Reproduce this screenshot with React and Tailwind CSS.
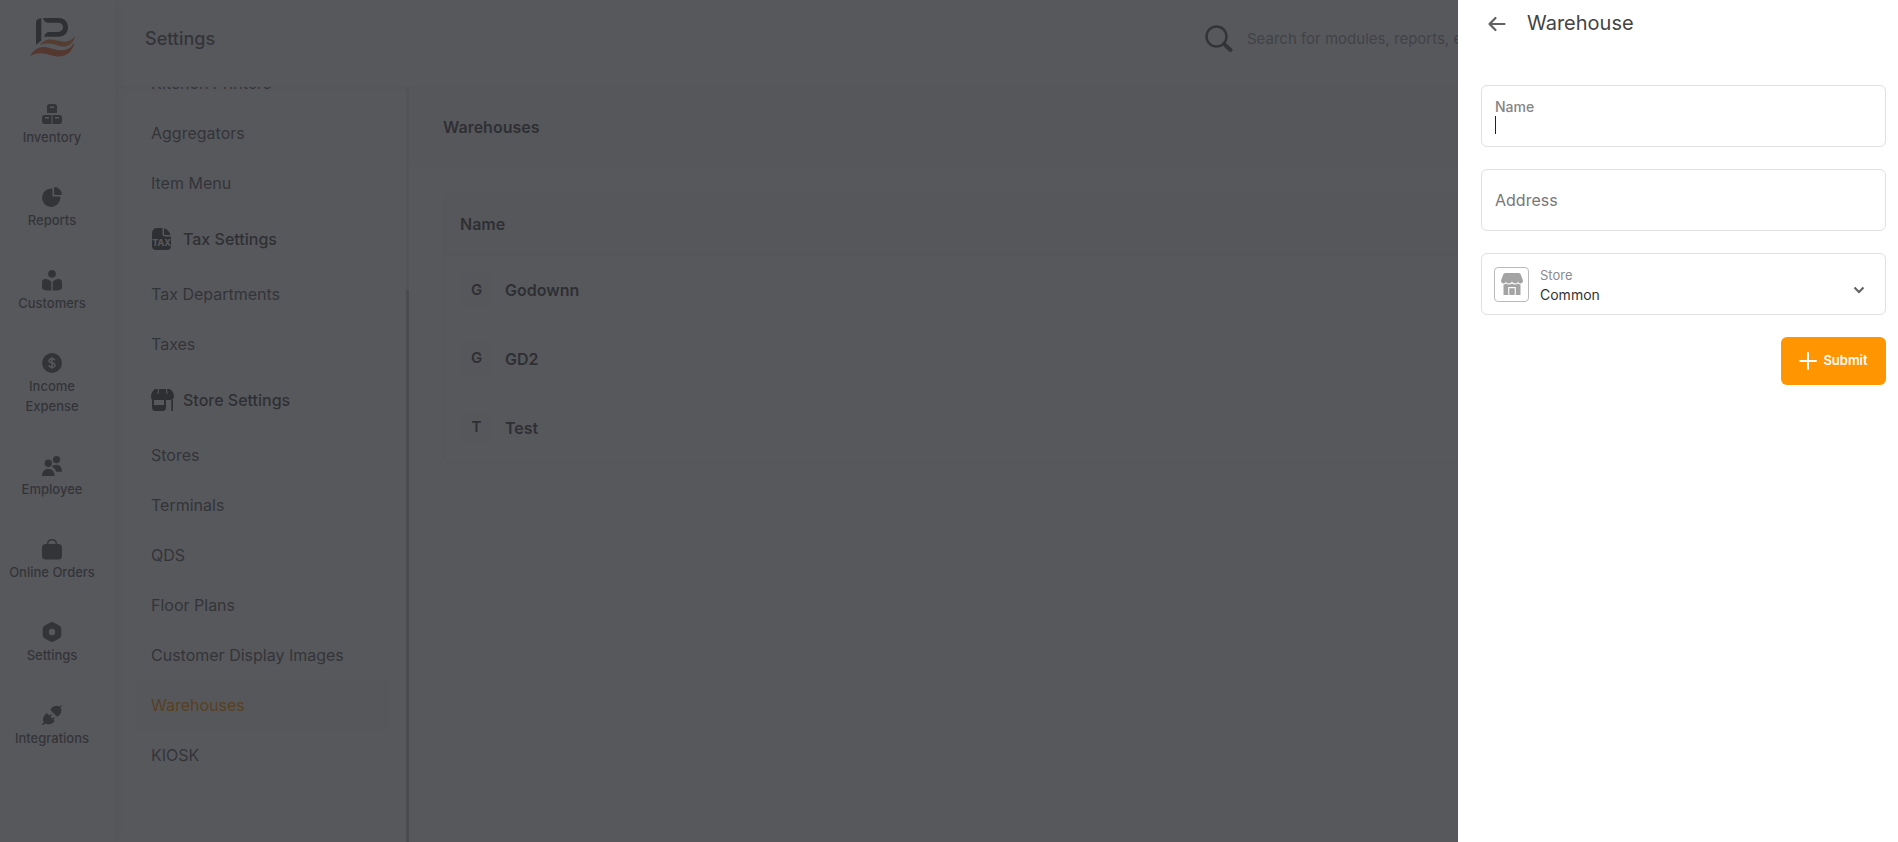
import React, { useState } from 'react';

const icons = {
  inventory: (
    <path d="M7.500 0h5A2.500 2.500 0 0 1 15 2.500V9H5V2.500A2.500 2.500 0 0 1 7.500 0ZM8 2.500v1.500h4V2.500ZM2.500 11H9.500v9h-7A2.500 2.500 0 0 1 0 17.500v-4A2.500 2.500 0 0 1 2.500 11ZM3 13v1.500h4V13ZM10.500 11h7a2.500 2.500 0 0 1 2.500 2.500v4a2.500 2.500 0 0 1-2.500 2.500h-7ZM13 13v1.500h4V13Z" fillRule="evenodd" />
  ),
  reports: (
    <>
      <path d="M9 1.500c1 0 1.500.5 1.500 1.500v5.500c0 .6.400 1 1 1H17c1 0 1.500.6 1.400 1.600A9.200 9.200 0 1 1 9 1.500Z" />
      <path d="M12 1.200c0-.8.600-1.300 1.400-1.100a8.500 8.500 0 0 1 6.400 6.300c.2.900-.3 1.600-1.200 1.600H13.500c-.9 0-1.500-.6-1.500-1.500Z" />
    </>
  ),
  customers: (
    <>
      <circle cx="10" cy="3.800" r="3.900" />
      <path d="M9.300 20.400C6 20.900 0 20.400 0 17.500V12c0-2 1.600-3.300 3.600-3 2.600.300 4.400 1.300 5.700 2.500ZM10.700 20.400c3.300.5 9.300 0 9.300-2.900V12c0-2-1.600-3.300-3.600-3-2.600.300-4.400 1.300-5.700 2.500Z" />
    </>
  ),
  income: (
    <>
      <circle cx="10" cy="10" r="10" />
      <path d="M13 7.400C12.700 6.300 11.500 5.700 10 5.700c-1.700 0-2.900.8-2.900 2.100 0 2.900 5.900 1.400 5.900 4.300 0 1.400-1.300 2.200-3 2.200-1.600 0-2.900-.7-3.100-1.900M10 4.300v11.400" fill="none" stroke="#fff" strokeWidth="1.400" />
    </>
  ),
  employee: (
    <>
      <circle cx="14.500" cy="3.600" r="3.700" />
      <circle cx="6.300" cy="7.200" r="3.700" />
      <path d="M0 20c0-4.400 2.300-7 6.300-7s6.300 2.600 6.300 7ZM9.800 10.600c1.100-1.100 2.500-1.800 4.300-1.800 3.700 0 5.900 2.500 5.900 7h-6c-.6-2.300-2-4.100-4.200-5.200Z" />
    </>
  ),
  orders: (
    <>
      <path d="M5.500 5.500C5.500 2.300 7.200.7 10 .7s4.500 1.600 4.500 4.800" fill="none" stroke="currentColor" strokeWidth="1.500" />
      <rect y="5" width="20" height="15.500" rx="3.500" />
    </>
  ),
  settings: (
    <path d="M8.300.4a3.400 3.400 0 0 1 3.400 0l5.900 3.400a3.400 3.400 0 0 1 1.600 2.900v6.600a3.400 3.400 0 0 1-1.600 2.900l-5.900 3.400a3.400 3.400 0 0 1-3.400 0l-5.900-3.400a3.400 3.400 0 0 1-1.600-2.900V6.700a3.400 3.400 0 0 1 1.600-2.900ZM10 6.800a3.200 3.200 0 1 0 0 6.400 3.200 3.200 0 0 0 0-6.400Z" fillRule="evenodd" />
  ),
  integrations: (
    <>
      <path d="M8.800 3.800c2.200-3.300 6-4 8.900-2.200L19.200.100l.7.700L18.400 2.300c1.800 2.900 1.100 6.700-2.200 8.900l-1.400.200L8.600 5.200Z" />
      <path d="M3.400 9.300l1.400-1.300L7.400 10.600 8.900 9.100l1 1-1.500 1.500 2 2 1.500-1.500 1 1-1.500 1.500 1.300 1.400-1.300 1.400c-2.300 2.200-5.600 2.600-8.200 1L1 20.200l-1-1 1.700-1.900C.200 14.700 1.200 11.500 3.400 9.300Z" />
    </>
  ),
};

const navItems = [
  { icon: 'inventory', label: 'Inventory' },
  { icon: 'reports', label: 'Reports' },
  { icon: 'customers', label: 'Customers' },
  { icon: 'income', label: 'Income Expense' },
  { icon: 'employee', label: 'Employee' },
  { icon: 'orders', label: 'Online Orders' },
  { icon: 'settings', label: 'Settings' },
  { icon: 'integrations', label: 'Integrations' },
];

const settingsMenu = [
  { items: ['Kitchen Printers', 'Aggregators', 'Item Menu'] },
  { title: 'Tax Settings', icon: 'tax', items: ['Tax Departments', 'Taxes'] },
  {
    title: 'Store Settings',
    icon: 'store',
    items: ['Stores', 'Terminals', 'QDS', 'Floor Plans', 'Customer Display Images', 'Warehouses', 'KIOSK'],
  },
];

const warehouses = ['Godownn', 'GD2', 'Test'];

const Logo = () => (
  <svg width="46" height="40" viewBox="0 0 46 40" aria-label="Logo">
    <path d="M6 27V4.500C6 2 7.500.500 11.300.200V22.500L6 27Z" fill="#555" />
    <path d="M13 0h16c5.500 0 9 4 9 9.300s-3.500 9.400-9 9.400H14c.8-3 2.500-4.800 5.500-4.800H28c3 0 5-1.800 5-4.600S31 4.700 28 4.700H18.500C15.500 4.700 13.500 3 13 0Z" fill="#555" />
    <path d="M9.500 27.500C14 21 20 20.500 27 22.500c8 2.200 14 1.500 18-4.500-1.500 9-8.500 12.500-17.500 9.500-6-2-11-3-18 0Z" fill="#f58a4a" />
    <path d="M0 38c5-8 11-10.500 19.500-8 8 2.500 18 5.500 25-5.500-2 10-10 16-20.500 13.500-8-2-14-5-24 0Z" fill="#f0703a" />
  </svg>
);

const TaxIcon = () => (
  <svg width="22" height="22" viewBox="0 0 22 22" fill="currentColor" aria-hidden="true">
    <path d="M6 0h5.500v6c0 1.500 1 2.500 2.500 2.500h6V18a4 4 0 0 1-4 4H5a4 4 0 0 1-4-4V5a5 5 0 0 1 5-5Z" />
    <path d="M13 .3c3 1 5.500 3.500 6.700 6.700H13.500a.5.500 0 0 1-.5-.5Z" />
    <text x="10.500" y="18" textAnchor="middle" fontSize="9" fontWeight="700" fill="#fff">TAX</text>
  </svg>
);

const StoreSettingsIcon = () => (
  <svg width="24" height="22" viewBox="0 0 24 22" fill="currentColor" className="-mr-[2px]" aria-hidden="true">
    <path d="M4 0h3l-.5 5h1L8 0h7l.5 5h1L16 0h3c2.500 1.500 4 4.500 4 7.500 0 2-1 3-2.500 3.500H22v11h-1.700V11H15v7.500a3.500 3.500 0 0 1-3.500 3.500h-7A3.500 3.500 0 0 1 1 18.500V10.500C.3 9.800 0 8.700 0 7.500 0 4.500 1.500 1.500 4 0ZM3 11v5h10v-5Z" fillRule="evenodd" />
  </svg>
);

const ShopIcon = () => (
  <svg width="22" height="22" viewBox="0 0 22 22" fill="#a3a3a3" aria-hidden="true">
    <path d="M4 0h14l1.500 1L22 7.500C22 9.400 20.800 10.500 19.500 10.500S17.200 9.500 17 8.200c-.2 1.300-1.200 2.300-2.700 2.300S11.500 9.500 11 8.200c-.5 1.300-1.800 2.300-3.300 2.300S5.200 9.500 5 8.200c-.2 1.300-1.200 2.300-2.500 2.300S0 9.400 0 7.500L2.500 1Z" />
    <path d="M2.500 11.500c1 0 1.900-.3 2.500-1 .7.700 1.700 1 2.800 1s2.400-.4 3.200-1c.8.600 2 1 3.200 1 1.100 0 2.100-.3 2.800-1 .6.700 1.500 1 2.500 1V22h-4.700v-8H7.200v8H2.500Z" />
    <path d="M8.300 15.200h5.400V22H8.300Z" />
  </svg>
);

export default function App() {
  const [name, setName] = useState('');
  const [address, setAddress] = useState('');
  const [store, setStore] = useState('Common');

  return (
    <div className="relative h-screen overflow-hidden bg-white font-['Inter',sans-serif] text-[#666]">
      <div className="flex h-full">
        {/* Main navigation */}
        <nav className="flex w-[117px] shrink-0 flex-col border-r border-[#f3f3f3] shadow-[4px_0_12px_rgba(0,0,0,0.04)]">
          <div className="flex h-[88px] items-center pb-3 pl-[30px]">
            <Logo />
          </div>
          <ul className="w-[104px] pt-4">
            {navItems.map((item) => (
              <li key={item.label} className="mb-10">
                <a href="#" className="flex flex-col items-center gap-[3px] px-1 text-center text-[13px] leading-5 font-medium">
                  <svg width="20" height="20" viewBox="0 0 20 20" fill="currentColor" className="overflow-visible" aria-hidden="true">
                    {icons[item.icon]}
                  </svg>
                  {item.label}
                </a>
              </li>
            ))}
          </ul>
        </nav>

        <div className="flex min-w-0 flex-1 flex-col">
          <header className="flex h-[87px] shrink-0 items-center border-b border-[#f3f3f3] pb-2 pl-7 shadow-[0_4px_12px_rgba(0,0,0,0.03)]">
            <h1 className="flex-1 text-lg font-medium">Settings</h1>
            <label className="mr-[203px] flex w-[490px] items-center gap-[14px]">
              <svg width="28" height="28" viewBox="0 0 28 28" fill="none" stroke="currentColor" aria-hidden="true">
                <circle cx="11.500" cy="11.500" r="10" strokeWidth="2.500" />
                <path d="M19 19l6.500 6" strokeWidth="4" strokeLinecap="round" />
              </svg>
              <input
                aria-label="Search"
                placeholder="Search for modules, reports, etc"
                className="flex-1 bg-transparent text-[15px] outline-none placeholder:text-[#a0a0a0]"
              />
            </label>
          </header>

          <div className="flex min-h-0 flex-1">
            {/* Settings menu, scrolled down */}
            <aside className="flex w-[292px] shrink-0">
              <div className="flex min-w-0 flex-1 flex-col justify-end overflow-hidden pr-4 pb-[62px] pl-[18px]">
                {settingsMenu.map((group) => (
                  <section key={group.items[0]}>
                    {group.title && (
                      <h2 className="flex h-[61px] items-center gap-[10px] pl-4 font-medium text-[#505050]">
                        {group.icon === 'tax' ? <TaxIcon /> : <StoreSettingsIcon />}
                        {group.title}
                      </h2>
                    )}
                    <ul>
                      {group.items.map((item) => (
                        <li key={item}>
                          <a
                            href="#"
                            className={`flex h-[50px] items-center rounded pl-4 ${
                              item === 'Warehouses' ? 'bg-[#fafafa] text-[#ff9500]' : ''
                            }`}
                          >
                            {item}
                          </a>
                        </li>
                      ))}
                    </ul>
                  </section>
                ))}
              </div>
              <div className="flex w-[3px] flex-col bg-[#eee]">
                <div className="mt-[203px] flex-1 bg-[#c8c8c8]" />
              </div>
            </aside>

            <main className="min-w-0 flex-1">
              <div className="flex h-20 items-center border-b border-[#f3f3f3] bg-[#fbfbfb] pl-[34px]">
                <h2 className="font-semibold text-[#505050]">Warehouses</h2>
              </div>
              <div className="px-[34px] pt-[26px]">
                <div className="overflow-hidden rounded-lg border border-[#f3f3f3]">
                  <table className="w-full text-left text-[#505050]">
                    <thead>
                      <tr className="h-[61px] border-b border-[#f3f3f3] bg-[#fbfbfb]">
                        <th className="pl-4 font-semibold">Name</th>
                      </tr>
                    </thead>
                    <tbody>
                      {warehouses.map((w) => (
                        <tr key={w} className="h-[69px] font-semibold">
                          <td className="pl-4">
                            <div className="flex items-center gap-3">
                              <span className="flex size-[33px] items-center justify-center rounded bg-[#fafafa] text-[15px]">
                                {w[0]}
                              </span>
                              {w}
                            </div>
                          </td>
                        </tr>
                      ))}
                    </tbody>
                  </table>
                </div>
              </div>
            </main>
          </div>
        </div>
      </div>

      <div className="absolute inset-0 bg-[#25262b]/77" />

      {/* Warehouse drawer */}
      <div role="dialog" aria-label="Warehouse" className="absolute inset-y-0 right-0 w-[440px] bg-white pr-3 pl-[23px]">
        <div className="flex h-[46px] items-center gap-5">
          <button type="button" aria-label="Back" className="pt-[2px] pl-[6px]">
            <svg width="20" height="20" viewBox="0 0 20 20" fill="none" stroke="#606060" strokeWidth="2.200" strokeLinecap="round" strokeLinejoin="round">
              <path d="M17.500 10H2.500M8.500 4l-6 6 6 6" />
            </svg>
          </button>
          <h2 className="text-xl text-[#444]">Warehouse</h2>
        </div>

        <form className="flex flex-col gap-[22px] pt-[39px]" onSubmit={(e) => e.preventDefault()}>
          <label className="flex h-[62px] flex-col rounded-md border border-[#e0e0e0] px-[13px] pt-3">
            <span className="text-sm leading-[18px] font-medium text-[#858585]">Name</span>
            <span className="flex items-center">
              {name === '' && <span className="h-[18px] w-px bg-[#222]" />}
              <input
                autoFocus
                value={name}
                onChange={(e) => setName(e.target.value)}
                className={`h-[18px] min-w-0 flex-1 text-base leading-[18px] text-[#333] outline-none ${name === '' ? 'caret-transparent' : ''}`}
              />
            </span>
          </label>

          <input
            aria-label="Address"
            placeholder="Address"
            value={address}
            onChange={(e) => setAddress(e.target.value)}
            className="h-[62px] rounded-md border border-[#e0e0e0] px-[13px] text-base outline-none placeholder:text-[#777]"
          />

          <div className="flex h-[62px] items-center gap-[11px] rounded-md border border-[#e0e0e0] pr-5 pl-3">
            <span className="flex size-[35px] items-center justify-center rounded border border-[#bbb]">
              <ShopIcon />
            </span>
            <div className="flex flex-1 flex-col pt-[2px]">
              <label htmlFor="store" className="text-[13px] leading-5 text-[#8a8a92]">Store</label>
              <select
                id="store"
                value={store}
                onChange={(e) => setStore(e.target.value)}
                className="appearance-none text-sm leading-5 text-[#333] outline-none"
              >
                <option>Common</option>
              </select>
            </div>
            <svg width="12" height="8" viewBox="0 0 12 8" fill="none" stroke="#606060" strokeWidth="2" className="mb-5 self-end" aria-hidden="true">
              <path d="M1.500 1.500L6 6l4.500-4.500" />
            </svg>
          </div>

          <button
            type="submit"
            className="flex h-12 w-[105px] items-center justify-center gap-[6px] self-end rounded-md bg-[#ff9500] text-[13px] font-semibold text-white"
          >
            <svg width="18" height="18" viewBox="0 0 18 18" stroke="currentColor" strokeWidth="2" strokeLinecap="round" aria-hidden="true">
              <path d="M9 1v16M1 9h16" />
            </svg>
            Submit
          </button>
        </form>
      </div>
    </div>
  );
}
